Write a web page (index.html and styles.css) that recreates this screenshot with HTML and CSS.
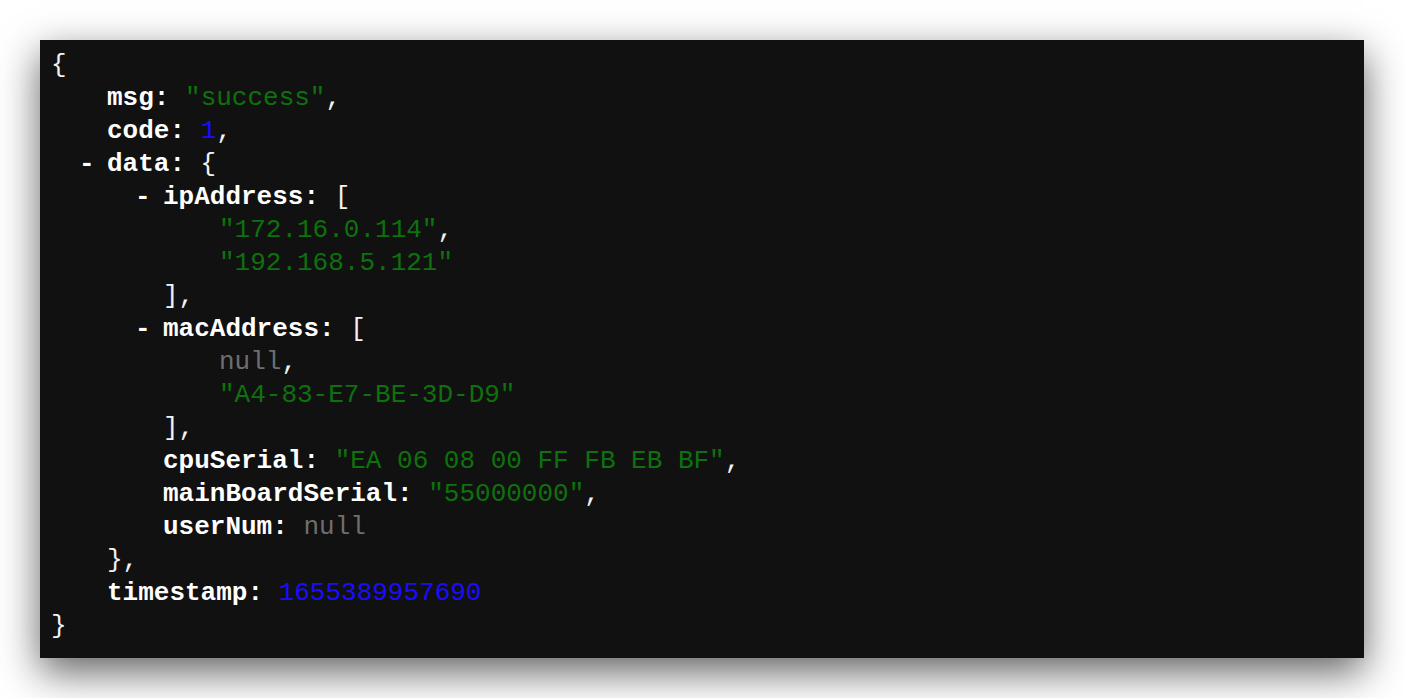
FILE: index.html
```html
<!DOCTYPE html>
<html lang="en">
<head>
<meta charset="utf-8">
<title>JSON</title>
<link rel="stylesheet" href="styles.css">
</head>
<body>
<div class="viewer">
  <div class="punct">{</div>
  <ul class="level">
    <li><span class="key">msg:</span> <span class="str">"success"</span>,</li>
    <li><span class="key">code:</span> <span class="num">1</span>,</li>
    <li><span class="toggle">-</span><span class="key">data:</span> {
      <ul class="level">
        <li><span class="toggle">-</span><span class="key">ipAddress:</span> [
          <ul class="level">
            <li><span class="str">"172.16.0.114"</span>,</li>
            <li><span class="str">"192.168.5.121"</span></li>
          </ul>
          ],
        </li>
        <li><span class="toggle">-</span><span class="key">macAddress:</span> [
          <ul class="level">
            <li><span class="null">null</span>,</li>
            <li><span class="str">"A4-83-E7-BE-3D-D9"</span></li>
          </ul>
          ],
        </li>
        <li><span class="key">cpuSerial:</span> <span class="str">"EA 06 08 00 FF FB EB BF"</span>,</li>
        <li><span class="key">mainBoardSerial:</span> <span class="str">"55000000"</span>,</li>
        <li><span class="key">userNum:</span> <span class="null">null</span></li>
      </ul>
      },
    </li>
    <li><span class="key">timestamp:</span> <span class="num">1655389957690</span></li>
  </ul>
  <div class="punct">}</div>
</div>
</body>
</html>
```
FILE: styles.css
```css
html, body {
  margin: 0;
  background: #ffffff;
}
body {
  padding: 40px;
}
.viewer {
  background: #111111;
  color: #f2f2f2;
  font-family: "Liberation Mono", "Courier New", monospace;
  font-size: 26px;
  line-height: 33px;
  padding: 9px 0 15px 11px;
  box-shadow: 0 14px 38px rgba(0, 0, 0, 0.62);
}
.level {
  list-style: none;
  margin: 0 0 0 56px;
  padding: 0;
}
.key {
  font-weight: bold;
  color: #ffffff;
}
.toggle {
  display: inline-block;
  width: 28px;
  margin-left: -28px;
  font-weight: bold;
  color: #ffffff;
}
.str {
  color: #0d720d;
}
.num {
  color: #1a0dff;
}
.null {
  color: #6e6e6e;
}
```
